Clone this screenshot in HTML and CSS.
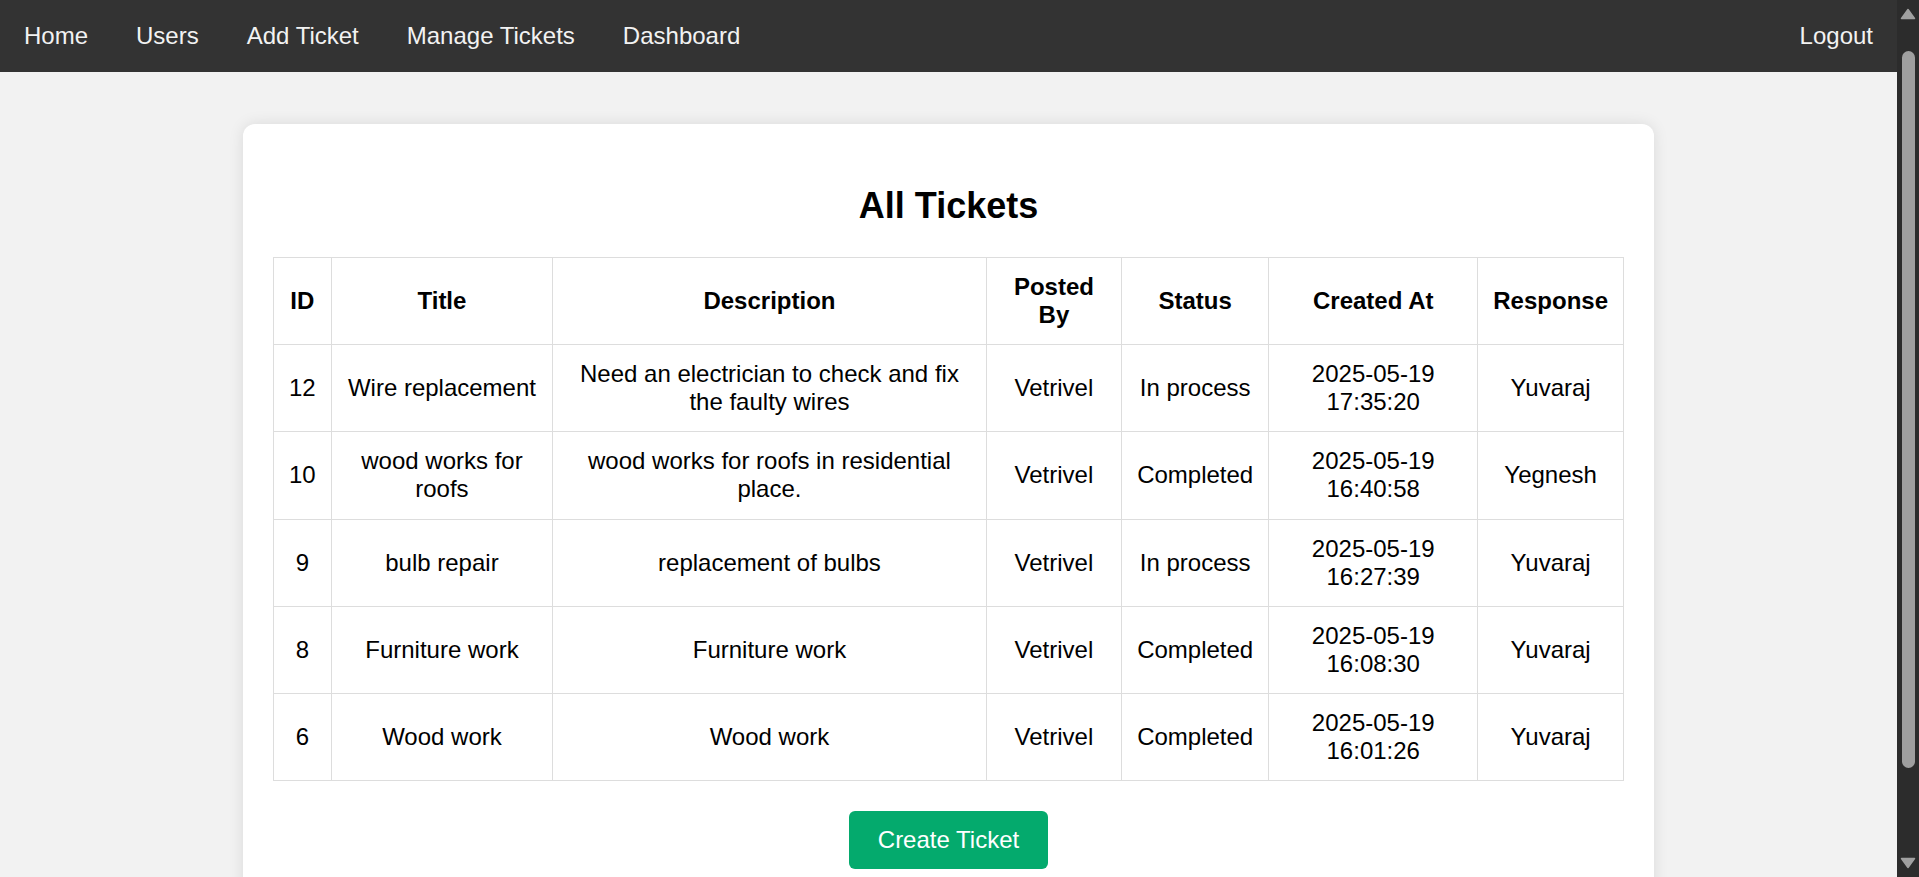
FILE: index.html
```html
<!DOCTYPE html>
<html lang="en">
<head>
<meta charset="utf-8">
<title>All Tickets</title>
<link rel="stylesheet" href="styles.css">
</head>
<body>
<div class="viewport">
  <nav class="topnav">
    <div class="nav-left">
      <a href="#">Home</a>
      <a href="#">Users</a>
      <a href="#">Add Ticket</a>
      <a href="#">Manage Tickets</a>
      <a href="#">Dashboard</a>
    </div>
    <div class="nav-right">
      <a href="#">Logout</a>
    </div>
  </nav>
  <main class="page">
    <section class="card">
      <h2 class="card-title">All Tickets</h2>
      <table class="tickets">
        <thead>
          <tr>
            <th>ID</th>
            <th>Title</th>
            <th>Description</th>
            <th>Posted By</th>
            <th>Status</th>
            <th>Created At</th>
            <th>Response</th>
          </tr>
        </thead>
        <tbody>
          <tr>
            <td>12</td>
            <td>Wire replacement</td>
            <td>Need an electrician to check and fix the faulty wires</td>
            <td>Vetrivel</td>
            <td>In process</td>
            <td>2025-05-19 17:35:20</td>
            <td>Yuvaraj</td>
          </tr>
          <tr>
            <td>10</td>
            <td>wood works for roofs</td>
            <td>wood works for roofs in residential place.</td>
            <td>Vetrivel</td>
            <td>Completed</td>
            <td>2025-05-19 16:40:58</td>
            <td>Yegnesh</td>
          </tr>
          <tr>
            <td>9</td>
            <td>bulb repair</td>
            <td>replacement of bulbs</td>
            <td>Vetrivel</td>
            <td>In process</td>
            <td>2025-05-19 16:27:39</td>
            <td>Yuvaraj</td>
          </tr>
          <tr>
            <td>8</td>
            <td>Furniture work</td>
            <td>Furniture work</td>
            <td>Vetrivel</td>
            <td>Completed</td>
            <td>2025-05-19 16:08:30</td>
            <td>Yuvaraj</td>
          </tr>
          <tr>
            <td>6</td>
            <td>Wood work</td>
            <td>Wood work</td>
            <td>Vetrivel</td>
            <td>Completed</td>
            <td>2025-05-19 16:01:26</td>
            <td>Yuvaraj</td>
          </tr>
        </tbody>
      </table>
      <div class="actions">
        <a class="btn" href="#">Create Ticket</a>
      </div>
    </section>
  </main>
</div>
<div class="scrollbar" aria-hidden="true">
  <svg class="sb-arrow" width="16" height="12" viewBox="0 0 16 12"><path d="M1.5 10.5 L8 1.5 L14.5 10.5 Z" fill="#a0a0a0" stroke="#a0a0a0" stroke-width="1.5" stroke-linejoin="round"/></svg>
  <div class="sb-thumb"></div>
  <svg class="sb-arrow sb-arrow-down" width="16" height="12" viewBox="0 0 16 12"><path d="M1.5 1.5 L14.5 1.5 L8 10.5 Z" fill="#a0a0a0" stroke="#a0a0a0" stroke-width="1.5" stroke-linejoin="round"/></svg>
</div>
</body>
</html>
```
FILE: styles.css
```css
html,
body {
  height: 100%;
}

body {
  margin: 0;
  display: flex;
  overflow: hidden;
  background: #f2f2f2;
  color: #000;
  font-family: "Liberation Sans", Arial, sans-serif;
  font-size: 24px;
  line-height: 28px;
}

.viewport {
  flex: 1;
  min-width: 0;
  height: 100%;
  overflow-y: auto;
  scrollbar-width: none;
  background: #f2f2f2;
}

.viewport::-webkit-scrollbar {
  display: none;
}

.scrollbar {
  width: 22px;
  flex: none;
  height: 100%;
  background: #2c2c2c;
  display: flex;
  flex-direction: column;
  align-items: center;
  padding: 8px 0 8px;
  box-sizing: border-box;
}

.sb-arrow {
  display: block;
  flex: none;
}

.sb-thumb {
  flex: none;
  width: 13px;
  height: 717px;
  margin: 31px 0 0 1px;
  background: #9f9f9f;
  border-radius: 7px;
}

.sb-arrow-down {
  margin-top: auto;
}

.topnav {
  display: flex;
  justify-content: space-between;
  background: #333;
}

.nav-left,
.nav-right {
  display: flex;
}

.topnav a {
  display: block;
  color: #f2f2f2;
  text-decoration: none;
  padding: 22px 24px;
  font-size: 24px;
  line-height: 28px;
}

.page {
  padding: 52px 0 51px;
}

.card {
  width: 1351px;
  margin: 0 auto;
  padding: 30px;
  background: #fff;
  border-radius: 12px;
  box-shadow: 0 0 15px rgba(0, 0, 0, 0.1);
}

.card-title {
  margin: 31px 0 30px;
  text-align: center;
  font-size: 36px;
  line-height: 42px;
  font-weight: bold;
}

.tickets {
  width: 100%;
  border-collapse: collapse;
}

.tickets th,
.tickets td {
  border: 1px solid #ddd;
  padding: 15.1px 15px;
  text-align: center;
  vertical-align: middle;
}

.tickets th {
  font-weight: bold;
}

.actions {
  display: flex;
  justify-content: center;
  margin-top: 30px;
}

.btn {
  display: inline-block;
  background: #04aa6d;
  color: #fff;
  text-decoration: none;
  padding: 15px 29px;
  border-radius: 6px;
  font-size: 24px;
  line-height: 28px;
}
```
